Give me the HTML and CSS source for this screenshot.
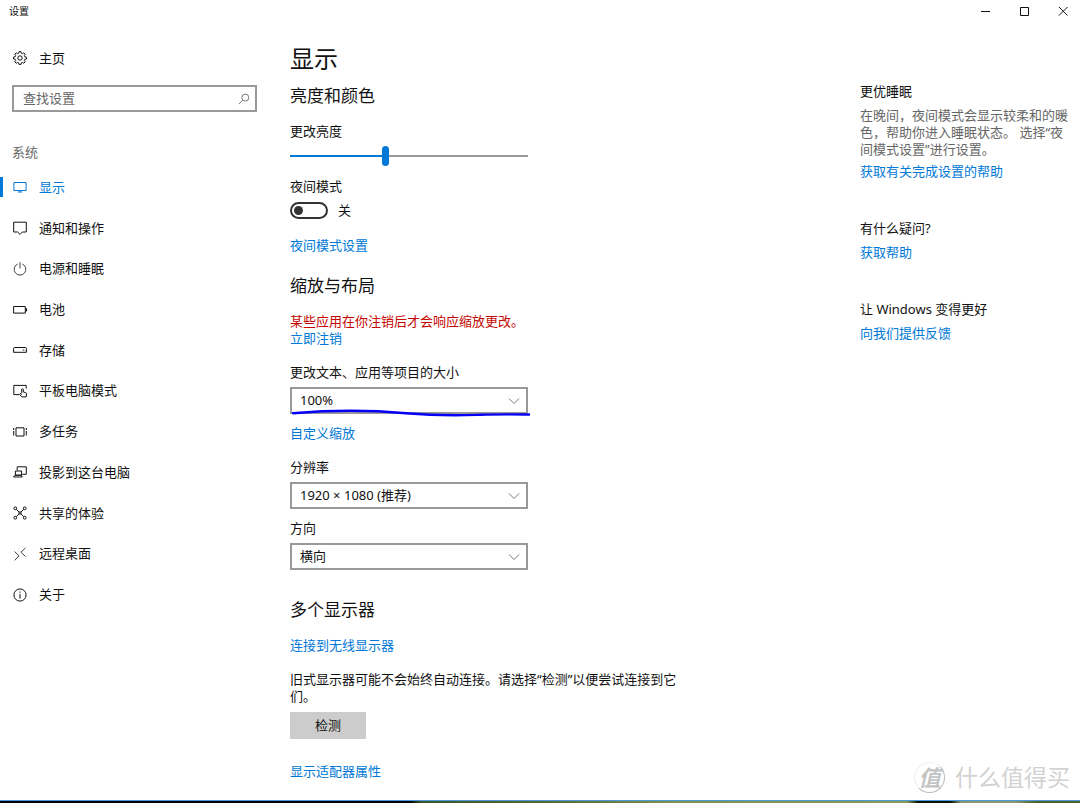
FILE: index.html
```html
<!DOCTYPE html>
<html lang="zh-CN">
<head>
<meta charset="utf-8">
<meta name="viewport" content="width=device-width, initial-scale=1">
<title>设置</title>
<link rel="stylesheet" href="styles.css">
</head>
<body>
<div class="window">
  <header class="titlebar">
    <span class="titlebar-name">设置</span>
    <div class="window-controls">
      <button type="button" aria-label="最小化"><svg class="glyph" viewBox="0 0 10 10"><path d="M1 5.5h9"/></svg></button>
      <button type="button" aria-label="最大化"><svg class="glyph" viewBox="0 0 10 10"><path d="M1.5 1.5h8v8h-8z"/></svg></button>
      <button type="button" aria-label="关闭"><svg class="glyph" viewBox="0 0 10 10"><path d="M1 1l8.500 8.500M9.500 1L1 9.500"/></svg></button>
    </div>
  </header>

  <div class="layout">
    <aside class="sidebar">
      <a class="home" href="#home">
        <svg class="icon" viewBox="0 0 14 14"><path d="M6 .7h2l.35 1.6 1.050.45L10.800 1.850l1.400 1.400-.9 1.400.45 1.050 1.600.35v2l-1.600.35-.45 1.050.9 1.400-1.400 1.400-1.400-.9-1.050.45L8 13.400H6l-.35-1.600-1.050-.45-1.400.9-1.400-1.400.9-1.400-.45-1.050L.65 8V6l1.600-.35.45-1.050-.9-1.400 1.400-1.400 1.400.9 1.050-.45z"/><circle cx="7" cy="7" r="2.200"/></svg>
        主页
      </a>
      <form class="search" role="search">
        <input type="search" placeholder="查找设置" aria-label="查找设置">
        <button type="button" aria-label="搜索"><svg class="search-icon" viewBox="0 0 12 12"><circle cx="7.300" cy="4.600" r="3.500"/><path d="M4.800 7.100L.8 11.100"/></svg></button>
      </form>
      <h2 class="group-name">系统</h2>
      <nav class="menu" aria-label="系统">
        <a class="menu-item current" href="#display" aria-current="page"><svg class="icon" viewBox="0 0 14 14"><path d="M.9 2.500h12.200v8H.9zM7 10.500v1.500M4.800 12h4.400"/></svg>显示</a>
        <a class="menu-item" href="#notifications"><svg class="icon" viewBox="0 0 14 14"><path d="M.7 1.200h12.600v9.800H9.400L7 13.400l-2.400-2.400H.7z"/></svg>通知和操作</a>
        <a class="menu-item" href="#power"><svg class="icon soft" viewBox="0 0 14 14"><path d="M7 .2v6.300M4.700 2A5.800 5.800 0 1 0 9.300 2"/></svg>电源和睡眠</a>
        <a class="menu-item" href="#battery"><svg class="icon" viewBox="0 0 14 14"><path d="M.6 3.500h11.700v6.600H.6zM12.800 5.500h.7v2.700h-.7"/></svg>电池</a>
        <a class="menu-item" href="#storage"><svg class="icon" viewBox="0 0 14 14"><path d="M1.200 4.500h11.600l.6 1v3.800H.6V5.500zM9.800 7h1.600"/></svg>存储</a>
        <a class="menu-item" href="#tablet"><svg class="icon" viewBox="0 0 14 14"><path d="M6 10.600H.8V1.400h12.400v3.200M8.700 9.300V5.200q.8-1 1.600 0V8l2.300.6q1 .3.900 1.300l-.3 3H8.800L6.500 10.300q.3-1.200 1.400-.4l.8.700"/></svg>平板电脑模式</a>
        <a class="menu-item" href="#multitask"><svg class="icon" viewBox="0 0 14 14"><path d="M3 2.800h8v8.200H3zM.7 3v2M.7 6v4.500M13.300 3v2M13.300 6v4.500"/></svg>多任务</a>
        <a class="menu-item" href="#project"><svg class="icon" viewBox="0 0 14 14"><path d="M4.200 5.500V1.800h9.100v7.500H9.300M2.400 6h6.200v4.200H2.400zM.5 12h8.800l-1-1.800H2z"/></svg>投影到这台电脑</a>
        <a class="menu-item" href="#shared"><svg class="icon" viewBox="0 0 14 14"><circle cx="2.300" cy="2.300" r="1.400"/><circle cx="11.700" cy="2.300" r="1.400"/><circle cx="2.300" cy="11.700" r="1.400"/><circle cx="11.700" cy="11.700" r="1.400"/><circle cx="7" cy="7" r="1.200"/><path d="M3.300 3.300l2.800 2.900M10.700 3.300L7.900 6.200M3.300 10.700l2.800-2.900M10.700 10.700L7.900 7.800"/></svg>共享的体验</a>
        <a class="menu-item" href="#remote"><svg class="icon soft" viewBox="0 0 14 14"><path d="M1.500 4.500l4.600 4.400-4.600 4.400M12.500.9L7.900 5.200l4.600 4.300"/></svg>远程桌面</a>
        <a class="menu-item" href="#about"><svg class="icon" viewBox="0 0 14 14"><circle cx="7" cy="7" r="6.100"/><path d="M7 5.800v4.800M7 3.500v1.200"/></svg>关于</a>
      </nav>
    </aside>

    <main class="content">
      <h1>显示</h1>

      <section class="section first">
        <h2>亮度和颜色</h2>
        <label class="field-name" for="brightness">更改亮度</label>
        <input class="slider" id="brightness" type="range" min="0" max="100" value="40">
        <label class="field-name" for="night">夜间模式</label>
        <div class="toggle-row"><input class="toggle" id="night" type="checkbox" role="switch"><span>关</span></div>
        <a class="link" href="#night-settings">夜间模式设置</a>
      </section>

      <section class="section">
        <h2>缩放与布局</h2>
        <p class="warning">某些应用在你注销后才会响应缩放更改。</p>
        <a href="#signout">立即注销</a>
        <label class="field-name" for="scale">更改文本、应用等项目的大小</label>
        <div class="picker">
          <select id="scale"><option>100%</option></select>
          <svg class="chevron" viewBox="0 0 12 8"><path d="M1 1.500l5 5 5-5"/></svg>
          <svg class="pen-mark" viewBox="0 0 240 8"><path d="M3 4.200C35 1.500 80 1 116 4.200S170 6.500 190 5.800S220 5.300 239 5.500"/></svg>
        </div>
        <a class="custom-scale" href="#custom">自定义缩放</a>
        <label class="field-name" for="resolution">分辨率</label>
        <div class="picker">
          <select id="resolution"><option>1920 × 1080 (推荐)</option></select>
          <svg class="chevron" viewBox="0 0 12 8"><path d="M1 1.500l5 5 5-5"/></svg>
        </div>
        <label class="field-name close" for="orientation">方向</label>
        <div class="picker">
          <select id="orientation"><option>横向</option></select>
          <svg class="chevron" viewBox="0 0 12 8"><path d="M1 1.500l5 5 5-5"/></svg>
        </div>
      </section>

      <section class="section last">
        <h2>多个显示器</h2>
        <a href="#wireless">连接到无线显示器</a>
        <p class="note">旧式显示器可能不会始终自动连接。请选择“检测”以便尝试连接到它们。</p>
        <button class="detect" type="button">检测</button>
        <a href="#adapter">显示适配器属性</a>
      </section>
    </main>

    <aside class="help">
      <section>
        <h3>更优睡眠</h3>
        <p>在晚间，夜间模式会显示较柔和的暖色，帮助你进入睡眠状态。 选择“夜间模式设置”进行设置。</p>
        <a href="#setup-help">获取有关完成设置的帮助</a>
      </section>
      <section>
        <h3>有什么疑问?</h3>
        <a href="#get-help">获取帮助</a>
      </section>
      <section>
        <h3>让 Windows 变得更好</h3>
        <a href="#feedback">向我们提供反馈</a>
      </section>
    </aside>
  </div>
  <div class="watermark"><span class="watermark-badge">值</span><span>什么值得买</span></div>
  <div class="desktop-edge"></div>
</div>
</body>
</html>
```
FILE: styles.css
```css
* { box-sizing: border-box; }

body {
  margin: 0;
  background: #fff;
  color: #111;
  font: 13px/17px "Noto Sans", "Noto Sans CJK SC", sans-serif;
}

h1, h2, h3, p { margin: 0; font-weight: 400; }
a { color: #0078d7; text-decoration: none; }
button, input, select { font: inherit; color: inherit; }
svg { fill: none; stroke: currentColor; stroke-width: 1; }

.window {
  position: relative;
  display: flex;
  flex-direction: column;
  min-height: 100vh;
}

.titlebar {
  display: flex;
  justify-content: space-between;
  align-items: center;
  height: 22px;
  padding-left: 9px;
}
.titlebar-name { font-size: 10px; }
.window-controls { display: flex; }
.window-controls button {
  display: grid;
  place-items: center;
  width: 39px;
  height: 22px;
  padding: 0 0 0 5px;
  border: 0;
  background: none;
}
.glyph { width: 10px; height: 10px; }

.layout {
  display: grid;
  grid-template-columns: 270px minmax(0, 1fr) 220px;
  flex: 1;
}

/* Sidebar */
.sidebar { padding-top: 25px; }
.home {
  display: flex;
  align-items: center;
  gap: 13px;
  height: 22px;
  padding-left: 12px;
  color: #111;
}
.icon { flex: none; width: 14px; height: 14px; }
.soft { opacity: 0.8; }
.search {
  display: flex;
  align-items: center;
  height: 27px;
  margin: 16px 13px 0 12px;
  border: 2px solid #999;
}
.search input {
  flex: 1;
  min-width: 0;
  padding: 0 9px;
  border: 0;
  outline: 0;
  background: none;
}
.search input::placeholder { color: #666; opacity: 1; }
.search button {
  display: grid;
  padding: 0 5px;
  border: 0;
  background: none;
  color: #777;
}
.search-icon { width: 12px; height: 12px; }
.group-name {
  padding: 32px 0 0 12px;
  color: #666;
  font-size: 13px;
  line-height: 17px;
}
.menu {
  display: grid;
  grid-auto-rows: 1fr;
  height: 448px;
  margin-top: 6px;
}
.home, .menu-item { gap: 12px; padding-left: 13px; }
.menu-item {
  display: flex;
  align-items: center;
  color: #111;
}
.current { color: #0078d7; }
.current::before {
  content: "";
  width: 3px;
  height: 20px;
  margin: 0 -2px 0 -13px;
  background: #0078d7;
}

/* Main column */
.content { padding: 21px 10px 12px 20px; }
.content h1 { font-size: 24px; line-height: 32px; }
.content h2 { font-size: 17px; line-height: 24px; }
.section {
  display: flex;
  flex-direction: column;
  align-items: flex-start;
  max-width: 388px;
  margin-top: 20px;
}
.section h2 { margin-bottom: 15px; }
.first { margin-top: 9px; }
.last { margin-top: 28px; }
.field-name { margin: 17px 0 6px; }
.close { margin-top: 11px; }
.first .field-name { margin-top: 0; }

.slider {
  appearance: none;
  width: 238px;
  height: 20px;
  margin: 0 0 12px;
  background: linear-gradient(to right, #0078d7 40%, #999 40%) center / 100% 2px no-repeat;
}
.slider::-webkit-slider-thumb {
  appearance: none;
  width: 7px;
  height: 20px;
  border-radius: 4px;
  background: #0078d7;
}
.toggle-row {
  display: flex;
  align-items: center;
  gap: 10px;
  height: 19px;
  margin-bottom: 17px;
}
.toggle {
  appearance: none;
  display: flex;
  align-items: center;
  width: 38px;
  height: 17px;
  margin: 0;
  padding-left: 2px;
  border: 2px solid #333;
  border-radius: 9px;
}
.toggle::before {
  content: "";
  width: 9px;
  height: 9px;
  border-radius: 50%;
  background: #333;
}

.warning { color: #c50500; }
.picker {
  position: relative;
  display: grid;
  align-items: center;
  width: 238px;
}
.picker select {
  grid-area: 1 / 1;
  appearance: none;
  width: 100%;
  height: 27px;
  padding: 0 28px 0 8px;
  border: 2px solid #999;
  border-radius: 0;
  background: #fff;
}
.chevron {
  grid-area: 1 / 1;
  justify-self: end;
  z-index: 1;
  width: 12px;
  height: 8px;
  margin-right: 8px;
  color: #777;
  pointer-events: none;
}
.pen-mark {
  position: absolute;
  left: 0;
  bottom: -3px;
  z-index: 2;
  width: 240px;
  height: 8px;
  overflow: visible;
  color: #0500f5;
  stroke-width: 2.400;
  stroke-linecap: round;
  pointer-events: none;
}
.custom-scale { margin-top: 11px; }
.note { margin: 17px 0 7px; }
.detect {
  width: 76px;
  height: 27px;
  margin-bottom: 24px;
  padding: 0;
  border: 0;
  background: #ccc;
}

/* Help column */
.help {
  display: flex;
  flex-direction: column;
  gap: 40px;
  padding: 61px 10px 0 0;
}
.help h3 { margin-bottom: 7px; font-size: 13px; line-height: 17px; }
.help p { margin-bottom: 5px; color: #666; }

.watermark {
  position: absolute;
  right: 10px;
  bottom: 10px;
  display: flex;
  align-items: center;
  gap: 10px;
  color: #d2d2d2;
  font-size: 23px;
  line-height: 32px;
}
.watermark-badge {
  width: 31px;
  height: 31px;
  border: 1px solid #eee;
  border-right-color: #bbb;
  border-bottom-color: #bbb;
  border-radius: 50%;
  color: #c4c4c4;
  font-size: 22px;
  font-style: italic;
  font-weight: 700;
  line-height: 28px;
  text-align: center;
}

/* Sliver of desktop below the window */
.desktop-edge {
  height: 3px;
  border-top: 1px solid #4a9ae0;
  background: linear-gradient(to right, #000 38%, #3f5428 39%, #55692e 50%, #7f8f4a 62%, #8a9852 84%, #0a1008 85%, #0a1008 88%, #8c9670 89%, #8c9670 94%, #4c6228 96%);
}
```
